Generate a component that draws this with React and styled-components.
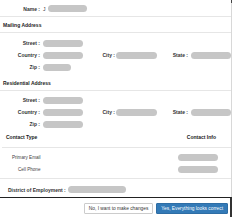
import React from "react";
import styled, { createGlobalStyle } from "styled-components";

const Global = createGlobalStyle`
  html, body { margin: 0; padding: 0; background: #fff; }
  body { font-family: "Liberation Sans", Arial, sans-serif; color: #333; }
  * { box-sizing: border-box; }
`;

const Frame = styled.div`
  width: 232px;
  height: 217px;
  display: flex;
  flex-direction: column;
  overflow: hidden;
  background: #fff;
`;

const Body = styled.div`
  position: relative;
  width: 232px;
  border-right: 1px solid #d8d8d8;
  display: flex;
  flex-direction: column;
`;

const Thumb = styled.div`
  position: absolute;
  right: -1px;
  top: 0;
  width: 1px;
  height: 3px;
  background: #444;
`;

const NameRow = styled.div`
  height: 17px;
  display: grid;
  grid-template-columns: 43px auto;
  align-items: center;
  border-bottom: 1px solid #e6e6e6;
  padding-top: 1px;
`;

const Label = styled.span`
  font-size: 5px;
  font-weight: 700;
  line-height: 8px;
  text-align: right;
  padding-right: ${(p) => p.$pad ?? 3}px;
  white-space: nowrap;
  color: #333;
`;

const Value = styled.span`
  display: flex;
  align-items: center;
  font-size: 5px;
  line-height: 8px;
`;

const Pill = styled.span`
  display: inline-block;
  width: ${(p) => p.$w}px;
  height: 7px;
  border-radius: 4px;
  background: #c6c6c6;
  margin-left: ${(p) => p.$ml ?? 0}px;
`;

const SectionHeader = styled.div`
  height: 16px;
  display: flex;
  align-items: center;
  padding-left: 3px;
  font-size: 5px;
  font-weight: 700;
  color: #222;
  border-bottom: 1px solid #e6e6e6;
`;

const Fields = styled.div`
  padding: ${(p) => p.$pt ?? 3}px 0 ${(p) => p.$pb ?? 2}px;
  display: flex;
  flex-direction: column;
`;

const FieldRow = styled.div`
  height: 12px;
  display: grid;
  grid-template-columns: 43px 40px 33px 41px 34px 40px;
  align-items: center;
`;

const ContactHead = styled.div`
  display: flex;
  justify-content: space-between;
  padding: 3px 15px 6px 4px;
  margin-left: 2px;
  font-size: 5px;
  line-height: 8px;
  font-weight: 700;
  color: #222;
  border-bottom: 1px solid #e6e6e6;
`;

const ContactList = styled.div`
  padding: 3px 0 3px;
  border-bottom: 1px solid #e6e6e6;
`;

const ContactRow = styled.div`
  height: 12px;
  display: flex;
  align-items: center;
  justify-content: space-between;
  padding-right: 13px;
`;

const ContactType = styled.span`
  font-size: 4.6px;
  color: #444;
  padding-left: ${(p) => p.$pl}px;
`;

const DistrictRow = styled.div`
  display: flex;
  align-items: center;
  padding: 6px 0 3px 8px;
  height: 18px;
  gap: 2px;
`;

const Footer = styled.div`
  flex: 1;
  border-top: 1px solid #222;
  border-right: 2px solid #333;
  display: flex;
  justify-content: flex-end;
  align-items: flex-start;
  gap: 3px;
  padding: 5px 2px 0 0;
`;

const Button = styled.button`
  height: 11px;
  padding: 0 4px;
  font-family: "Liberation Sans", Arial, sans-serif;
  font-size: 4.8px;
  line-height: 9px;
  border-radius: 1px;
  border: 1px solid ${(p) => (p.$primary ? "#2e6da4" : "#ccc")};
  background: ${(p) => (p.$primary ? "#337ab7" : "#fff")};
  color: ${(p) => (p.$primary ? "#fff" : "#333")};
  white-space: nowrap;
  cursor: pointer;
`;

function AddressFields({ streetW, zipW, pt, pb }) {
  return (
    <Fields $pt={pt} $pb={pb}>
      <FieldRow>
        <Label>Street :</Label>
        <Value>
          <Pill $w={streetW} />
        </Value>
      </FieldRow>
      <FieldRow>
        <Label>Country :</Label>
        <Value>
          <Pill $w={40} />
        </Value>
        <Label $pad={1}>City :</Label>
        <Value>
          <Pill $w={41} />
        </Value>
        <Label>State :</Label>
        <Value>
          <Pill $w={40} />
        </Value>
      </FieldRow>
      <FieldRow>
        <Label>Zip :</Label>
        <Value>
          <Pill $w={zipW} />
        </Value>
      </FieldRow>
    </Fields>
  );
}

export default function App() {
  return (
    <>
      <Global />
      <Frame>
        <Body>
          <Thumb />
          <NameRow>
            <Label>Name :</Label>
            <Value>
              J<Pill $w={39} $ml={2} />
            </Value>
          </NameRow>
          <SectionHeader>Mailing Address</SectionHeader>
          <AddressFields streetW={54} zipW={28} pt={4} pb={2} />
          <SectionHeader>Residential Address</SectionHeader>
          <AddressFields streetW={56} zipW={40} pt={3} pb={0} />
          <ContactHead>
            <span>Contact Type</span>
            <span>Contact Info</span>
          </ContactHead>
          <ContactList>
            <ContactRow>
              <ContactType $pl={12}>Primary Email</ContactType>
              <Pill $w={40} />
            </ContactRow>
            <ContactRow>
              <ContactType $pl={18}>Cell Phone</ContactType>
              <Pill $w={40} />
            </ContactRow>
          </ContactList>
          <DistrictRow>
            <Label $pad={0}>District of Employment :</Label>
            <Pill $w={58} />
          </DistrictRow>
        </Body>
        <Footer>
          <Button>No, I want to make changes</Button>
          <Button $primary>Yes, Everything looks correct</Button>
        </Footer>
      </Frame>
    </>
  );
}
